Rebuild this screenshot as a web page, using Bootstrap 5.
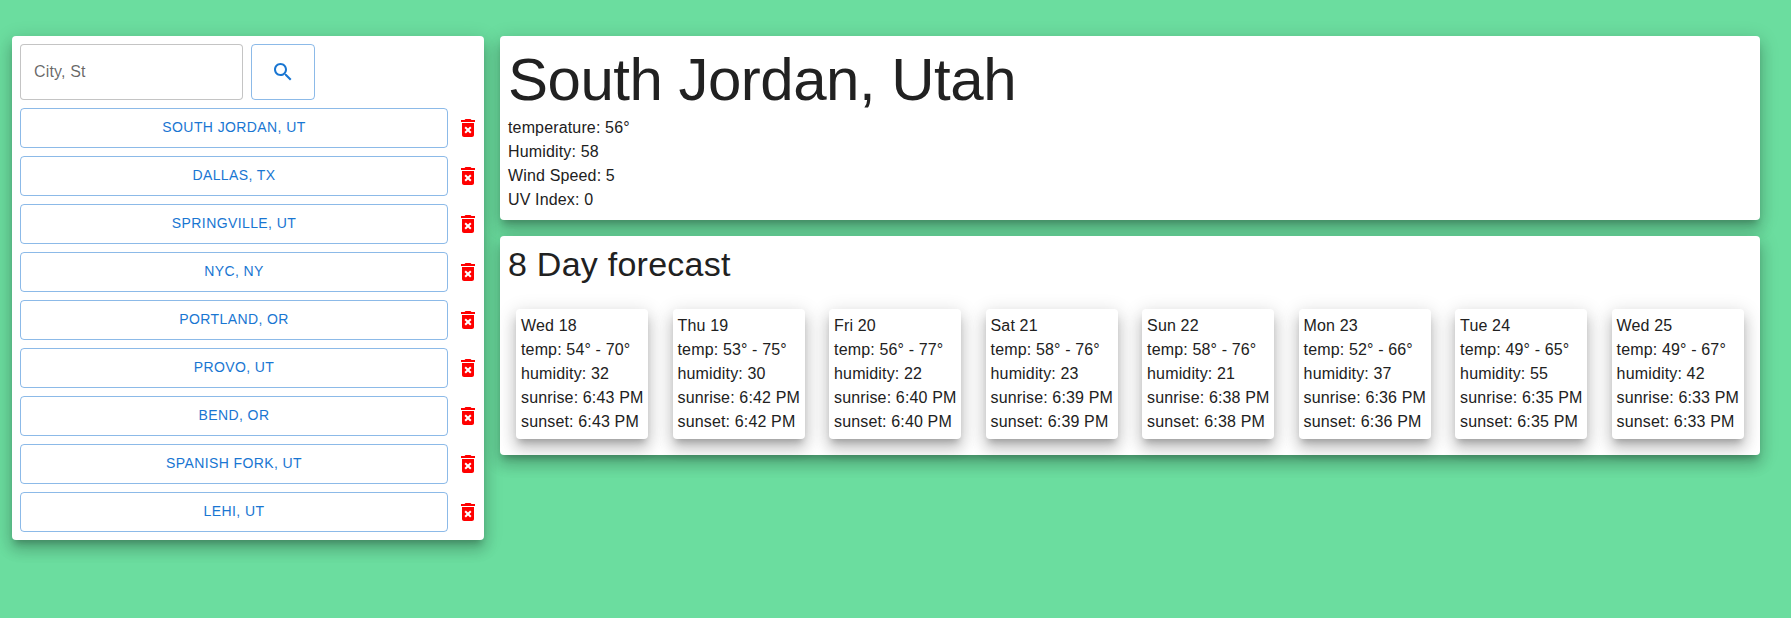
<!DOCTYPE html>
<html lang="en">
<head>
<meta charset="utf-8">
<meta name="viewport" content="width=device-width, initial-scale=1">
<title>Weather</title>
<link href="https://cdn.jsdelivr.net/npm/bootstrap@5.3.0/dist/css/bootstrap.min.css" rel="stylesheet">
<style>
  body { background: #6bdd9f; color: #212121; font-family: "Liberation Sans", Arial, sans-serif; font-size: 16px; line-height: 24px; letter-spacing: .00938em; padding: 36px 31px 0 12px; min-height: 100vh; }
  .panel { background: #fff; border-radius: 4px; padding: 8px; box-shadow: 0 6px 6px -3px rgba(0,0,0,.2), 0 10px 14px 1px rgba(0,0,0,.14), 0 4px 18px 3px rgba(0,0,0,.12); }
  .sidebar { width: 472px; padding-right: 4px; }
  .city-input { width: 223px; height: 56px; padding: 0 13px; border-color: rgba(0,0,0,.23); border-radius: 4px; letter-spacing: .00938em; }
  .city-input::placeholder { color: rgba(0,0,0,.6); }
  .btn-line { --bs-btn-color: #1976d2; --bs-btn-border-color: rgba(25,118,210,.5); --bs-btn-border-radius: 4px; --bs-btn-font-size: 14px; letter-spacing: .02857em; height: 40px; padding: 0; line-height: 24px; }
  .btn-city { padding-bottom: 2px; }
  .btn-search { width: 64px; height: 56px; }
  .icon { width: 24px; height: 24px; fill: currentColor; display: block; flex: none; }
  .trash { color: #f00; }
  .place { font-size: 60px; line-height: 72px; letter-spacing: -.00833em; font-weight: 400; }
  .heading { font-size: 34px; line-height: 40px; letter-spacing: .00735em; font-weight: 400; }
  .days { padding: 25px 8px 8px; }
  .day { width: 132.3px; padding: 5px; border-radius: 4px; background: #fff; white-space: nowrap; box-shadow: 0 6px 6px -3px rgba(0,0,0,.2), 0 10px 14px 1px rgba(0,0,0,.14), 0 4px 18px 3px rgba(0,0,0,.12); }
</style>
</head>
<body>
<main class="d-flex align-items-start gap-3">
  <aside class="panel sidebar d-flex flex-column gap-2 flex-shrink-0" id="cities">
    <form class="d-flex gap-2">
      <input class="form-control city-input" type="text" placeholder="City, St" aria-label="City, St">
      <button class="btn btn-line btn-search d-flex align-items-center justify-content-center" type="button" aria-label="Search">
        <svg class="icon" viewBox="0 0 24 24"><path d="M15.5 14h-.79l-.28-.27C15.41 12.59 16 11.11 16 9.5 16 5.91 13.09 3 9.5 3S3 5.91 3 9.5 5.91 16 9.5 16c1.61 0 3.09-.59 4.23-1.57l.27.28v.79l5 4.99L20.49 19l-4.99-5zm-6 0C7.01 14 5 11.99 5 9.5S7.01 5 9.5 5 14 7.01 14 9.5 11.99 14 9.5 14z"/></svg>
      </button>
    </form>
  </aside>
  <div class="flex-grow-1 d-flex flex-column gap-3">
    <section class="panel">
      <h1 class="place m-0">South Jordan, Utah</h1>
      <div>temperature: 56°</div>
      <div>Humidity: 58</div>
      <div>Wind Speed: 5</div>
      <div>UV Index: 0</div>
    </section>
    <section class="panel">
      <h2 class="heading m-0">8 Day forecast</h2>
      <div class="days d-flex justify-content-between" id="days"></div>
    </section>
  </div>
</main>
<script src="https://cdn.jsdelivr.net/npm/bootstrap@5.3.0/dist/js/bootstrap.bundle.min.js"></script>
<script>
  const cities = ["South Jordan, UT", "Dallas, TX", "Springville, UT", "NYC, NY", "Portland, OR", "Provo, UT", "Bend, OR", "Spanish Fork, UT", "Lehi, UT"];
  const trash = '<svg class="icon trash" viewBox="0 0 24 24"><path d="M6 19c0 1.1.9 2 2 2h8c1.1 0 2-.9 2-2V7H6v12zm2.46-7.12 1.41-1.41L12 12.59l2.12-2.12 1.41 1.41L13.41 14l2.12 2.12-1.41 1.41L12 15.41l-2.12 2.12-1.41-1.41L10.59 14l-2.13-2.12zM15.5 4l-1-1h-5l-1 1H5v2h14V4z"/></svg>';
  document.getElementById("cities").insertAdjacentHTML("beforeend", cities.map(c =>
    `<div class="d-flex align-items-center gap-2"><button class="btn btn-line btn-city flex-grow-1 text-uppercase" type="button">${c}</button>${trash}</div>`).join(""));
  const days = [
    ["Wed 18", 54, 70, 32, "6:43"], ["Thu 19", 53, 75, 30, "6:42"], ["Fri 20", 56, 77, 22, "6:40"], ["Sat 21", 58, 76, 23, "6:39"],
    ["Sun 22", 58, 76, 21, "6:38"], ["Mon 23", 52, 66, 37, "6:36"], ["Tue 24", 49, 65, 55, "6:35"], ["Wed 25", 49, 67, 42, "6:33"]
  ];
  document.getElementById("days").innerHTML = days.map(([d, lo, hi, h, t]) =>
    `<div class="day"><div>${d}</div><div>temp: ${lo}° - ${hi}°</div><div>humidity: ${h}</div><div>sunrise: ${t} PM</div><div>sunset: ${t} PM</div></div>`).join("");
</script>
</body>
</html>
